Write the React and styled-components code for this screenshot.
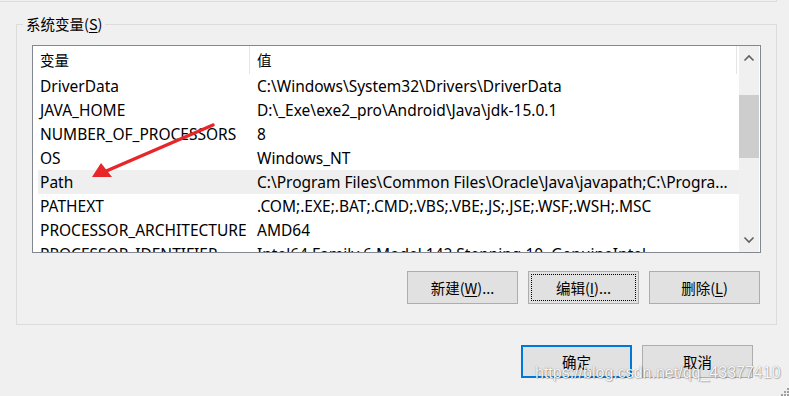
import React from "react";
import styled, { createGlobalStyle } from "styled-components";

const GlobalStyle = createGlobalStyle`
  html, body {
    margin: 0;
    padding: 0;
    background: #f0f0f0;
  }
  body {
    width: 789px;
    height: 396px;
    overflow: hidden;
    font-family: "Noto Sans", "Noto Sans CJK SC", sans-serif;
    font-size: 14px;
    color: #000;
  }
`;

const Window = styled.div`
  position: relative;
  width: 789px;
  height: 396px;
  display: flex;
  flex-direction: column;
`;

const PrevGroup = styled.div`
  width: 776px;
  height: 1px;
  border-bottom: 1px solid #dcdcdc;
  border-right: 1px solid #dcdcdc;
`;

const Group = styled.div`
  position: relative;
  margin: 22px 0 0 16px;
  width: 761px;
  height: 301px;
  border: 1px solid #dcdcdc;
  padding: 20px 16px 0 15px;
  box-sizing: border-box;
  display: flex;
  flex-direction: column;
`;

const Legend = styled.div`
  position: absolute;
  top: -12px;
  left: 6px;
  padding: 0 3px;
  background: #f0f0f0;
  line-height: 22px;
  font-size: 14.5px;
  font-family: "Noto Sans CJK SC", sans-serif;
  u { text-decoration: underline; text-underline-offset: 2px; }
`;

const ListBox = styled.div`
  width: 729px;
  height: 208px;
  border: 1px solid #828790;
  box-sizing: border-box;
  background: #fff;
  display: flex;
  overflow: hidden;
`;

const ListContent = styled.div`
  flex: 1;
  overflow: hidden;
  display: flex;
  flex-direction: column;
`;

const HeaderRow = styled.div`
  display: grid;
  grid-template-columns: 217px 487px 1px;
  height: 28px;
  flex: none;
  align-items: center;
`;

const HeaderCell = styled.div`
  height: 28px;
  line-height: 28px;
  padding-left: ${(p) => p.$pad}px;
  font-size: 14.5px;
  font-family: "Noto Sans CJK SC", sans-serif;
  border-right: ${(p) => (p.$divider ? "1px solid #e5e5e5" : "none")};
  box-sizing: border-box;
`;

const Row = styled.div`
  display: grid;
  grid-template-columns: 212px 489px;
  height: 24px;
  line-height: 24px;
  font-size: 15.5px;
  flex: none;
  margin-left: 5px;
  background: ${(p) => (p.$selected ? "#efefef" : "transparent")};
  white-space: nowrap;
`;

const Cell = styled.div`
  padding-left: ${(p) => p.$pad}px;
  overflow: hidden;
`;

const ScrollBar = styled.div`
  width: 20px;
  flex: none;
  background: #f0f0f0;
  display: flex;
  flex-direction: column;
  align-items: stretch;
  margin-right: 1px;
`;

const ArrowBtn = styled.div`
  height: 24px;
  display: flex;
  align-items: center;
  justify-content: center;
  flex: none;
`;

const Track = styled.div`
  flex: 1;
  padding-top: 25px;
`;

const Thumb = styled.div`
  height: 63px;
  background: #cdcdcd;
`;

const ButtonRow = styled.div`
  display: flex;
  justify-content: flex-end;
  gap: 10px;
  margin-top: 18px;
`;

const Button = styled.button`
  width: 111px;
  height: 33px;
  box-sizing: border-box;
  background: #e1e1e1;
  border: ${(p) => (p.$default ? "2px solid #0078d7" : "1px solid #adadad")};
  font-family: "Noto Sans CJK SC", sans-serif;
  font-size: 14.5px;
  color: #000;
  padding: 0;
  position: relative;
  cursor: default;
  u { text-decoration: underline; text-underline-offset: 2px; }
  &::after {
    content: "";
    display: ${(p) => (p.$focus ? "block" : "none")};
    position: absolute;
    inset: 2px;
    border: 1px dotted #000;
  }
`;

const Footer = styled.div`
  display: flex;
  justify-content: flex-end;
  gap: 10px;
  margin: 20px 36px 0 0;
`;

const Watermark = styled.div`
  position: absolute;
  left: 535px;
  top: 364px;
  font-family: "Liberation Sans", sans-serif;
  font-size: 16px;
  color: rgba(255, 255, 255, 0.95);
  text-shadow: 0 0 1px rgba(0, 0, 0, 0.45), 1px 1px 1px rgba(0, 0, 0, 0.2);
`;

const Grip = styled.svg`
  position: absolute;
  right: 0;
  bottom: 0;
`;

const Arrow = styled.svg`
  position: absolute;
  left: 0;
  top: 0;
  pointer-events: none;
`;

const rows = [
  ["DriverData", "C:\\Windows\\System32\\Drivers\\DriverData"],
  ["JAVA_HOME", "D:\\_Exe\\exe2_pro\\Android\\Java\\jdk-15.0.1"],
  ["NUMBER_OF_PROCESSORS", "8"],
  ["OS", "Windows_NT"],
  ["Path", "C:\\Program Files\\Common Files\\Oracle\\Java\\javapath;C:\\Progra..."],
  ["PATHEXT", ".COM;.EXE;.BAT;.CMD;.VBS;.VBE;.JS;.JSE;.WSF;.WSH;.MSC"],
  ["PROCESSOR_ARCHITECTURE", "AMD64"],
  ["PROCESSOR_IDENTIFIER", "Intel64 Family 6 Model 142 Stepping 10, GenuineIntel"],
];

const Chevron = ({ up }) => (
  <svg width="12" height="8" viewBox="0 0 12 8">
    <path
      d={up ? "M1.5 6.5 L6 2 L10.5 6.5" : "M1.5 1.5 L6 6 L10.5 1.5"}
      fill="none"
      stroke="#606060"
      strokeWidth="1.6"
    />
  </svg>
);

const App = () => (
  <Window>
    <GlobalStyle />
    <PrevGroup />
    <Group>
      <Legend>
        系统变量(<u>S</u>)
      </Legend>
      <ListBox>
        <ListContent>
          <HeaderRow>
            <HeaderCell $pad={7} $divider>
              变量
            </HeaderCell>
            <HeaderCell $pad={7} $divider>
              值
            </HeaderCell>
          </HeaderRow>
          {rows.map(([name, value]) => (
            <Row key={name} $selected={name === "Path"}>
              <Cell $pad={2}>{name}</Cell>
              <Cell $pad={7}>{value}</Cell>
            </Row>
          ))}
        </ListContent>
        <ScrollBar>
          <ArrowBtn>
            <Chevron up />
          </ArrowBtn>
          <Track>
            <Thumb />
          </Track>
          <ArrowBtn>
            <Chevron />
          </ArrowBtn>
        </ScrollBar>
      </ListBox>
      <ButtonRow>
        <Button>
          新建(<u>W</u>)...
        </Button>
        <Button $focus>
          编辑(<u>I</u>)...
        </Button>
        <Button>
          删除(<u>L</u>)
        </Button>
      </ButtonRow>
    </Group>
    <Footer>
      <Button $default>确定</Button>
      <Button>取消</Button>
    </Footer>
    <Watermark>https://blog.csdn.net/qq_43377410</Watermark>
    <Grip width="8" height="10" viewBox="0 0 8 10">
      <g fill="#a0a0a0">
        <rect x="6" y="2" width="2" height="2" />
        <rect x="3" y="5" width="2" height="2" />
        <rect x="6" y="5" width="2" height="2" />
        <rect x="0" y="8" width="2" height="2" />
        <rect x="3" y="8" width="2" height="2" />
        <rect x="6" y="8" width="2" height="2" />
      </g>
    </Grip>
    <Arrow width="789" height="396" viewBox="0 0 789 396">
      <line x1="213" y1="125" x2="104" y2="172" stroke="#e8262a" strokeWidth="3.5" strokeLinecap="round" />
      <polygon points="92,177 101,163 112,177" fill="#e8262a" />
    </Arrow>
  </Window>
);

export default App;
